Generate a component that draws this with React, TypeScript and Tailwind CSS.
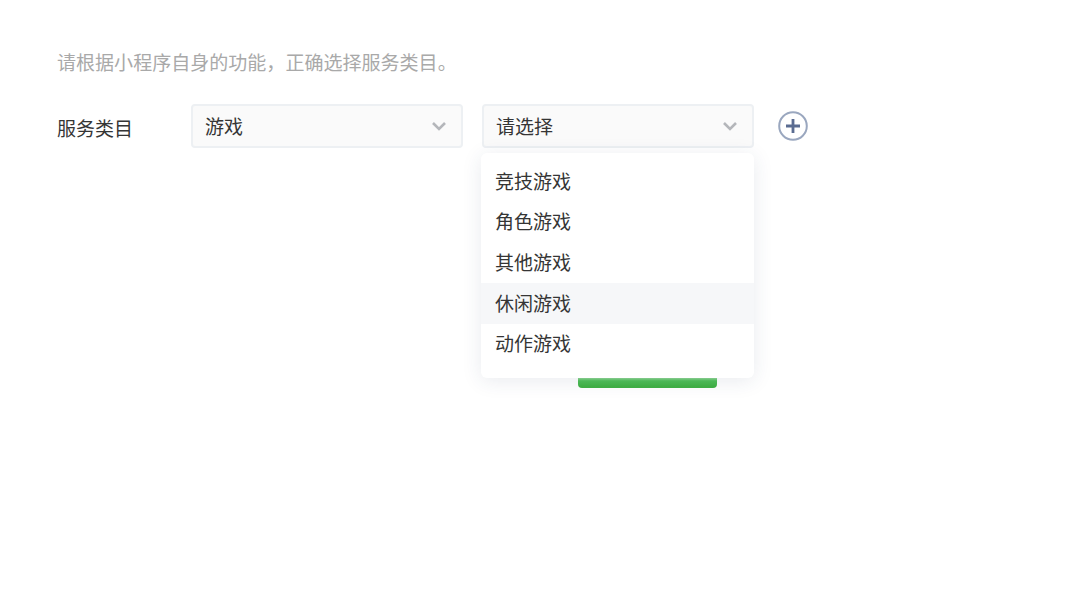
const font = { fontFamily: '"Noto Sans CJK SC", sans-serif' };

const options = ["竞技游戏", "角色游戏", "其他游戏", "休闲游戏", "动作游戏"];

function Chevron() {
  return (
    <svg width="16" height="10" viewBox="0 0 16 10" fill="none" className="shrink-0">
      <path d="M2 2l6 6 6-6" stroke="#b4b6ba" strokeWidth="2.6" />
    </svg>
  );
}

function Select({ label, children }: { label: string; children?: React.ReactNode }) {
  return (
    <div className="relative w-[272px]">
      <div className="flex h-[44px] items-center justify-between rounded-[4px] border-2 border-[#edf0f3] bg-[#fafafa] pl-[12px] pr-[14px] text-[19px] text-[#353535]">
        <span>{label}</span>
        <Chevron />
      </div>
      {children}
    </div>
  );
}

export default function App() {
  return (
    <div className="h-[608px] w-[1080px] overflow-hidden bg-white pl-[57px] pt-[48px]" style={font}>
      <p className="text-[19.05px] leading-[28px] text-[#a9a9a9]">请根据小程序自身的功能，正确选择服务类目。</p>

      <div className="mt-[28px] flex items-start">
        <div className="w-[134px] pt-[10px] text-[19px] leading-[28px] text-[#353535]">服务类目</div>
        <Select label="游戏" />
        <div className="ml-[19px]">
          <Select label="请选择">
            <div className="absolute left-[-1px] top-[49px] z-10 h-[225px] w-[273px] rounded-[6px] bg-white pt-[8px] shadow-[0_3px_20px_rgba(40,60,100,0.1)]">
              {options.map((o) => (
                <div
                  key={o}
                  className={
                    o === "休闲游戏"
                      ? "flex h-[40.7px] items-center bg-[#f6f7f9] pb-[1px] pl-[14px] text-[19px] text-[#353535]"
                      : "flex h-[40.7px] items-center pb-[1px] pl-[14px] text-[19px] text-[#353535]"
                  }
                >
                  {o}
                </div>
              ))}
            </div>
          </Select>
        </div>
        <svg width="30" height="30" viewBox="0 0 30 30" fill="none" className="ml-[24px] mt-[7px] shrink-0">
          <circle cx="15" cy="15" r="13.8" stroke="#9aa7bf" strokeWidth="2" />
          <path d="M15 8v14M8 15h14" stroke="#5a6c91" strokeWidth="2.8" />
        </svg>
      </div>

      <div className="ml-[521px] mt-[204px] h-[36px] w-[139px] rounded-[4px] bg-linear-to-b from-[#8fd694] from-[72%] via-[#4fc057] via-[80%] to-[#3fb144] to-[96%]" />
    </div>
  );
}
